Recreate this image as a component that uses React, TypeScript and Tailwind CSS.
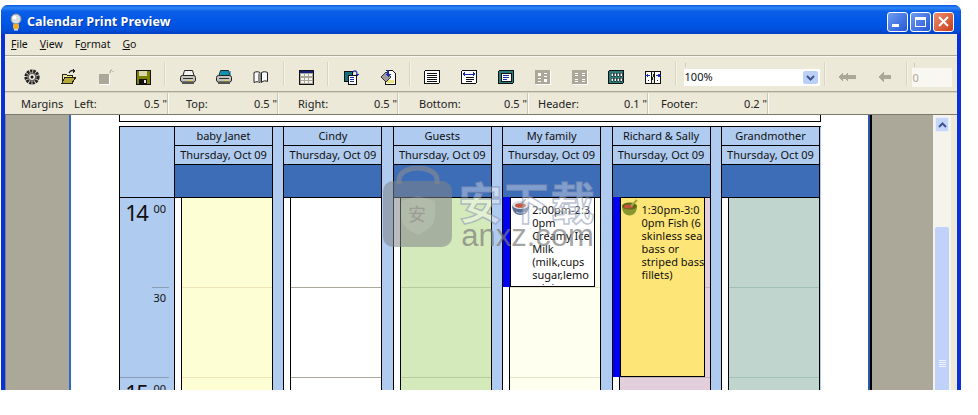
import type { ReactNode } from "react";

function Ico({ children, w = 16, h = 16 }: { children: ReactNode; w?: number; h?: number }) {
  return (
    <svg width={w} height={h} viewBox={`0 0 ${w} ${h}`} shapeRendering="crispEdges">
      {children}
    </svg>
  );
}

const Gear = () => (
  <Ico>
    <circle cx="8" cy="8" r="6" fill="none" stroke="#222" strokeWidth="3.2" strokeDasharray="2.400 0.800" shapeRendering="auto" />
    <circle cx="8" cy="8" r="3.800" fill="none" stroke="#666" strokeWidth="1.500" shapeRendering="auto" />
    <circle cx="8" cy="8" r="1.500" fill="#111" shapeRendering="auto" />
  </Ico>
);
const Open = () => (
  <Ico>
    <path d="M1 5h4l1 1h5v8H1z" fill="#f4e98a" stroke="#222" />
    <path d="M1 14l3-6h11l-4 6z" fill="#b5a83a" stroke="#222" />
    <path d="M8 4c1-2 3-3 5-2" fill="none" stroke="#222" strokeWidth="1.3" shapeRendering="auto" />
    <path d="M12 0l3 2-3 2z" fill="#222" />
  </Ico>
);
const Locked = () => (
  <Ico>
    <path d="M1 5h10v10H1z" fill="#aca899" />
    <path d="M11 6h1v10H2v-1h9z" fill="#fff" />
    <path d="M12 4c0-2 1-3 2-3s1 1 1 2" fill="none" stroke="#aca899" strokeWidth="1.2" shapeRendering="auto" />
    <path d="M14 1h1v1h-1z" fill="#fff" />
  </Ico>
);
const Save = () => (
  <Ico>
    <path d="M1 1h14v14H1z" fill="#808000" stroke="#111" />
    <path d="M4 2h8v5H4z" fill="#d8d8a8" />
    <path d="M4 10h8v5H4z" fill="#111" />
    <path d="M9 11h2v3H9z" fill="#e8e8e8" />
  </Ico>
);
const Printer = ({ cyan }: { cyan?: boolean }) => (
  <svg width="16" height="16" viewBox="0 0 16 16">
    <path d="M4.500 1.500h8l1.500 5H3z" fill={cyan ? "#16b4c8" : "#f2f2f2"} stroke="#222" />
    {cyan && <path d="M5 3h10M5 5h10" stroke="#0b6f9f" />}
    <rect x="0.500" y="6.500" width="15" height="6.500" rx="2" fill="#c4c4bc" stroke="#222" />
    <path d="M2 13h12v2H2z" fill="#55554f" />
    <path d="M3 9h10v1H3z" fill="#333" />
    <path d="M9 11h3v1H9z" fill="#e8d83c" />
  </svg>
);
const Book = () => (
  <svg width="16" height="16" viewBox="0 0 16 16">
    <path d="M1 3.500c2-1 4-1 6 0v10c-2-1-4-1-6 0z" fill="#f8f8f8" stroke="#222" />
    <path d="M8.500 3.500c2-1 4-1 6 0v9c-2-1-4-1-6 1z" fill="#f8f8f8" stroke="#222" />
    <path d="M5 4.500h2v8.500H5z" fill="#8c8c8c" />
  </svg>
);
const Month = () => (
  <Ico>
    <path d="M1 1h14v14H1z" fill="#a8a69a" stroke="#111" />
    <path d="M2 2h13v2H2z" fill="#16217e" />
    {[5, 9, 12].map((y) =>
      [3, 7, 11].map((x) => <path key={`${x}${y}`} d={`M${x} ${y}h3v2h-3z`} fill="#f5f5ee" />)
    )}
  </Ico>
);
const Pages = () => (
  <Ico>
    <path d="M1 2h8v10H1z" fill="#17707a" stroke="#111" />
    <path d="M5 6h8v9H5z" fill="#fff" stroke="#111" />
    <path d="M7 8h4v1H7zM7 10h4v1H7zM7 12h4v1H7z" fill="#1c2fb4" />
    <path d="M10 3c2-2 4-1 4 2" fill="none" stroke="#1c2fb4" strokeWidth="1.2" shapeRendering="auto" />
    <path d="M12 5h4l-2 2z" fill="#1c2fb4" />
  </Ico>
);
const Paint = () => (
  <Ico>
    <path d="M6 1h6l3 3v11H5V8" fill="#fff" stroke="#111" />
    <path d="M7 11h7v3H7z" fill="#ece27a" />
    <path d="M1 8l5-5 5 5-5 5z" fill="#9c9c9c" stroke="#333" />
    <path d="M7 1h2v5H7z" fill="#1c2fb4" />
    <path d="M5 5h6l-3 3z" fill="#1c2fb4" />
  </Ico>
);
const Frame = ({ children, teal }: { children?: ReactNode; teal?: boolean }) => (
  <Ico>
    <rect x="0.5" y="1.5" width="15" height="13" rx="1.5" fill={teal ? "#2b7d7d" : "#fff"} stroke="#111" />
    {children}
  </Ico>
);
const Lines = () => (
  <Frame>
    <path d="M3 4h10v1H3zM3 6h10v1H3zM3 8h10v1H3zM3 10h10v1H3zM3 12h10v1H3z" fill="#111" />
  </Frame>
);
const Wide = () => (
  <Frame>
    <path d="M1 5l3-2v4zM15 5l-3-2v4z" fill="#1c2fb4" />
    <path d="M4 5h8v1H4z" fill="#1c2fb4" />
    <path d="M5 8h8v1H5zM5 10h8v1H5zM5 12h6v1H5z" fill="#111" />
  </Frame>
);
const TealPage = () => (
  <Frame teal>
    <path d="M3 4h10v8H3z" fill="#fff" stroke="#111" />
    <path d="M5 6h6v1H5zM5 8h6v1H5zM5 10h4v1H5z" fill="#1c2fb4" />
  </Frame>
);
const OffTwo = () => (
  <Ico>
    <rect x="1" y="2" width="15" height="14" fill="#fff" />
    <rect x="0" y="1" width="15" height="14" rx="1" fill="#aca899" />
    <path d="M3 4h3v3H3zM9 4h3v1H9zM9 7h3v1H9zM3 9h3v1H3zM3 12h3v1H3zM9 10h3v3H9z" fill="#fff" />
  </Ico>
);
const OffFour = () => (
  <Ico>
    <rect x="1" y="2" width="15" height="14" fill="#fff" />
    <rect x="0" y="1" width="15" height="14" rx="1" fill="#aca899" />
    <path d="M3 4h3v1H3zM10 4h3v1h-3zM3 6h3v1H3zM10 6h3v1h-3zM3 10h3v1H3zM10 10h3v1h-3zM3 12h3v1H3zM10 12h3v1h-3z" fill="#fff" />
  </Ico>
);
const Six = () => (
  <Frame teal>
    {[4, 9].map((y) =>
      [3, 6, 9, 12].map((x) => <path key={`${x}${y}`} d={`M${x} ${y}h2v3h-2z`} fill="#fff" stroke="#111" strokeWidth="0.5" />)
    )}
  </Frame>
);
const Facing = () => (
  <Ico>
    <path d="M0.500 2.500h6v12h-6zM9.500 2.500h6v12h-6z" fill="#fff" stroke="#111" />
    <path d="M7 2h2v1H7zM7 14h2v1H7z" fill="#111" />
    <path d="M9 5h-1v3H7v3H6v2h1v-2h1V8h1z" fill="#222" />
    <path d="M3 6h2v1H3zM11 6h2v1h-2z" fill="#1c2fb4" />
    <path d="M0 6.500l3-2v4zM16 6.500l-3-2v4z" fill="#1c2fb4" />
    <path d="M3 11h1v1H3zM12 11h1v1h-1z" fill="#222" />
  </Ico>
);
const BackTwo = () => (
  <Ico w={18} h={14}>
    <path d="M0 7l5-5v3h2l3-3v3h8v4h-8v3L7 9H5v3z" fill="#aca899" />
  </Ico>
);
const BackOne = () => (
  <Ico w={13} h={14}>
    <path d="M0 7l6-5v3h7v4H6v3z" fill="#aca899" />
  </Ico>
);

function Tool({ children }: { children: ReactNode }) {
  return <div className="w-[36.8px] h-[34px] pt-[6px] flex items-center justify-center">{children}</div>;
}
function Sep() {
  return <div className="w-[8px] flex justify-center"><div className="w-[2px] h-[24px] bg-[#d8d4c4] border-r border-[#f6f4ea]" /></div>;
}

function Margin({ label, value, w, pad }: { label: string; value: string; w: string; pad: string }) {
  return (
    <div className={`${w} ${pad} h-[21px] flex items-center justify-between pr-px border-r border-[#fbfaf4] shadow-[inset_-1px_0_0_#c9c6b4]`}>
      <span className="pt-[2px]">{label}</span>
      <span className="pt-[2px]">{value} "</span>
    </div>
  );
}

const cols = [
  { name: "baby Janet", fill: "bg-[#fefed4]", line: "border-[#efe3b8]" },
  { name: "Cindy", fill: "bg-white", line: "border-[#aca899]" },
  { name: "Guests", fill: "bg-[#d5eabb]", line: "border-[#b9ca9f]" },
  { name: "My family", fill: "bg-[#fffff0]", line: "border-[#e4e2c8]" },
  { name: "Richard & Sally", fill: "bg-[#e2cfdb]", line: "border-[#c4b3bd]" },
  { name: "Grandmother", fill: "bg-[#c1d5cf]", line: "border-[#a3c0b5]" },
];

function BowlBlue() {
  return (
    <svg width="17" height="17" viewBox="0 0 17 17">
      <path d="M0 6h17c0 6-3 10-8.500 10S0 12 0 6z" fill="#5d6f8f" />
      <ellipse cx="8.500" cy="6" rx="8.500" ry="4" fill="#d8dfe8" />
      <ellipse cx="8.500" cy="6.500" rx="5.500" ry="2.300" fill="#c6563c" />
      <path d="M4 13c3 1.500 6 1.500 9 0" stroke="#b8c6da" fill="none" />
      <path d="M9 5l5-5" stroke="#8d8d8d" strokeWidth="1.300" />
    </svg>
  );
}
function BowlGreen() {
  return (
    <svg width="17" height="17" viewBox="0 0 17 17">
      <path d="M0 7h15c0 6-3 9.500-7.500 9.500S0 13 0 7z" fill="#87962e" />
      <ellipse cx="7.500" cy="7" rx="7.500" ry="3.500" fill="#5a6a1a" />
      <ellipse cx="6.500" cy="7.500" rx="4.500" ry="2" fill="#c8503a" />
      <path d="M9 7l6-6" stroke="#a3a83e" strokeWidth="2.200" />
    </svg>
  );
}

function EventBox({ bg, h, icon, lines }: { bg: string; h: string; icon: ReactNode; lines: string[] }) {
  return (
    <div className={`absolute left-0 top-[-1px] w-[92px] ${h} flex z-10`}>
      <div className="w-[7px] bg-[#0000f0]" />
      <div className={`flex-1 ${bg} border border-black flex overflow-hidden`}>
        <div className="w-[21px] pt-px pl-px shrink-0">{icon}</div>
        <div className="leading-[13px] pt-[5px] whitespace-nowrap">
          {lines.map((l, i) => (
            <div key={i}>{l}</div>
          ))}
        </div>
      </div>
    </div>
  );
}

function Column({ name, fill, line, children }: { name: string; fill: string; line: string; children?: ReactNode }) {
  return (
    <div className="w-[99px] shrink-0 border-x border-black h-full flex flex-col">
      <div className="h-[19px] shrink-0 border-b border-black flex items-center justify-center">{name}</div>
      <div className="h-[19px] shrink-0 border-b border-black flex items-center justify-center">Thursday, Oct 09</div>
      <div className="h-[33px] shrink-0 bg-[#3e6db8] border-b border-black" />
      <div className="relative flex flex-1 bg-white">
        <div className="w-[6px] shrink-0" />
        <div className={`flex-1 border-l border-black ${fill}`}>
          <div className={`h-[90px] border-b ${line}`} />
          <div className={`h-[90px] border-b ${line}`} />
        </div>
        {children}
      </div>
    </div>
  );
}

function Hour({ h }: { h: string }) {
  return (
    <div className="flex justify-end pr-[8px] pt-px gap-[6px]">
      <span className="text-[22px] leading-[26px] tracking-[-1.500px]">{h}</span>
      <span className="text-[11px] leading-[13px] mt-[3px]">00</span>
    </div>
  );
}

export default function App() {
  return (
    <div className="w-[978px] h-[415px] bg-white overflow-hidden font-['Noto_Sans',sans-serif] text-[11px] text-[#111]">
      <div className="ml-px mt-[5px] w-[960px] h-[385px] rounded-t-[7px] bg-[#0831d9] px-[4px] flex flex-col overflow-hidden">
        {/* Title bar */}
        <div className="-mx-[4px] h-[29px] shrink-0 flex items-center pt-[4px] pl-[7px] pr-[7px] bg-[linear-gradient(180deg,#0a5be0_0%,#2f86f5_10%,#0a5fe8_22%,#0056e6_60%,#0050dc_85%,#0040c0_100%)]">
          <svg width="16" height="18" viewBox="0 0 16 18" className="mr-[3px]">
            <circle cx="8" cy="6" r="5" fill="#d8dde0" stroke="#8a9098" />
            <circle cx="6.500" cy="4.500" r="2" fill="#fff" />
            <rect x="5" y="11" width="6" height="5" rx="1" fill="#f0a82a" />
            <rect x="6" y="16" width="4" height="1.500" fill="#d6e0ea" />
          </svg>
          <span className="pt-[2px] font-['Open_Sans',sans-serif] font-bold text-[12.5px] text-white [text-shadow:1px_1px_0_#0a3aa8]">Calendar Print Preview</span>
          <div className="ml-auto flex gap-[2px]">
            <div className="w-[21px] h-[20px] rounded-[3px] border border-white bg-[linear-gradient(135deg,#6f9cf0,#2457d8)] flex items-end pl-[4px] pb-[4px]">
              <div className="w-[7px] h-[3px] bg-white" />
            </div>
            <div className="w-[21px] h-[20px] rounded-[3px] border border-white bg-[linear-gradient(135deg,#6f9cf0,#2457d8)] flex items-center justify-center">
              <div className="w-[11px] h-[10px] border border-white border-t-[3px]" />
            </div>
            <div className="w-[21px] h-[20px] rounded-[3px] border border-white bg-[linear-gradient(135deg,#ee9070,#c83a18)] flex items-center justify-center">
              <svg width="11" height="11" viewBox="0 0 11 11"><path d="M1 1l9 9M10 1l-9 9" stroke="#fff" strokeWidth="2" /></svg>
            </div>
          </div>
        </div>

        {/* Menu */}
        <div className="h-[21px] shrink-0 bg-[#ece9d8] flex items-center gap-[12px] pl-[6px] pt-px text-[10.5px]">
          <span><u>F</u>ile</span>
          <span><u>V</u>iew</span>
          <span>F<u>o</u>rmat</span>
          <span><u>G</u>o</span>
        </div>
        <div className="h-[2px] shrink-0 bg-[#f8f7f0] border-t border-[#aca899]" />

        {/* Toolbar */}
        <div className="h-[34px] shrink-0 bg-[#ece9d8] flex items-center pl-[9px]">
          <Tool><Gear /></Tool>
          <Tool><Open /></Tool>
          <Tool><Locked /></Tool>
          <Tool><Save /></Tool>
          <Sep />
          <Tool><Printer /></Tool>
          <Tool><Printer cyan /></Tool>
          <Tool><Book /></Tool>
          <Sep />
          <Tool><Month /></Tool>
          <Sep />
          <Tool><Pages /></Tool>
          <Tool><Paint /></Tool>
          <Sep />
          <Tool><Lines /></Tool>
          <Tool><Wide /></Tool>
          <Tool><TealPage /></Tool>
          <Tool><OffTwo /></Tool>
          <Tool><OffFour /></Tool>
          <Tool><Six /></Tool>
          <Tool><Facing /></Tool>
          <Sep />
          <div className="relative ml-[4px] w-[136px] h-[17px] bg-white flex items-center justify-between pl-px pr-[2px] mt-[7px]">
            <div className="absolute -top-[6px] left-px w-px h-[4px] bg-[#cfcbb8]" />
            <span>100%</span>
            <div className="w-[15px] h-[13px] rounded-[2px] bg-[#bcd0f6] flex items-center justify-center">
              <svg width="9" height="6" viewBox="0 0 9 6"><path d="M1 1l3.500 3.500L8 1" fill="none" stroke="#3c5590" strokeWidth="2" /></svg>
            </div>
          </div>
          <div className="ml-[1px]"><Sep /></div>
          <div className="w-[37px] pt-[6px] flex justify-center"><BackTwo /></div>
          <div className="w-[37px] pt-[6px] flex justify-center"><BackOne /></div>
          <Sep />
          <div className="relative ml-px w-[40px] h-[19px] bg-[#f8f7f2] text-[#aca899] pl-px leading-[19px] mt-[7px]">
            <div className="absolute -top-[5px] left-[2px] w-px h-[4px] bg-[#cfcbb8]" />
            0
          </div>
        </div>
        <div className="h-[2px] shrink-0 bg-[#aca899] border-b border-[#d6d3c2]" />

        {/* Margins */}
        <div className="h-[21px] shrink-0 bg-[#ece9d8] flex items-center pl-[16px] text-[#222]">
          <span className="w-[49px] pt-[2px]">Margins</span>
          <Margin label="Left:" value="0.5" w="w-[99px]" pad="pl-[4px]" />
          <Margin label="Top:" value="0.5" w="w-[110px]" pad="pl-[17px]" />
          <Margin label="Right:" value="0.5" w="w-[120px]" pad="pl-[19px]" />
          <Margin label="Bottom:" value="0.5" w="w-[130px]" pad="pl-[20px]" />
          <Margin label="Header:" value="0.1" w="w-[120px]" pad="pl-[9px]" />
          <Margin label="Footer:" value="0.2" w="w-[120px]" pad="pl-[12px]" />
        </div>
        <div className="h-px shrink-0 bg-[#7d7a6c]" />

        {/* Preview area */}
        <div className="h-[275px] shrink-0 flex overflow-hidden bg-[#ece9d8]">
          <div className="w-[64px] shrink-0 bg-[#aca899] border-l border-[#808080]" />
          <div className="w-[801px] shrink-0 bg-white border-x-2 border-l-[#316ac5] border-r-[#2a55b0] relative">
            <div className="ml-[48px] w-[702px]">
              <div className="h-[7px] border-x border-b border-black" />
              <div className="mt-[4px] h-[268px] border-t border-l border-black bg-[#afcbef] flex gap-[10.4px] overflow-hidden relative">
                {/* Time column */}
                <div className="w-[54px] shrink-0 -mr-[10.4px] flex flex-col">
                  <div className="h-[71px] shrink-0 border-b border-black" />
                  <div className="h-[90px] shrink-0 relative">
                    <Hour h="14" />
                    <div className="absolute bottom-0 right-[5px] w-[17px] border-b border-[#8b9cb6]" />
                  </div>
                  <div className="h-[90px] shrink-0 border-b border-[#8b9cb6] mr-[5px] pt-[3px] pr-[3px] text-right leading-[13px]">30</div>
                  <Hour h="15" />
                </div>
                {cols.map((c) => (
                  <Column key={c.name} {...c}>
                    {c.name === "My family" && (
                      <EventBox bg="bg-white" h="h-[90px]" icon={<BowlBlue />} lines={["2:00pm-2:3", "0pm", "Creamy Ice", "Milk", "(milk,cups", "sugar,lemo", "n juice"]} />
                    )}
                    {c.name === "Richard & Sally" && (
                      <EventBox bg="bg-[#fde577]" h="h-[180px]" icon={<BowlGreen />} lines={["1:30pm-3:0", "0pm Fish (6", "skinless sea", "bass or", "striped bass", "fillets)"]} />
                    )}
                  </Column>
                ))}
                {/* Watermark */}
                <div className="absolute left-[262px] top-[39px] w-[70px] h-[80px] z-20">
                  <svg width="72" height="82" viewBox="0 0 72 82">
                    <path d="M17 18V14C17 6 27 2 36 2s19 4 19 12v4" fill="none" stroke="#8c8c8c" strokeOpacity="0.6" strokeWidth="5" />
                    <rect x="1" y="15" width="69" height="66" rx="10" fill="#808488" fillOpacity="0.55" />
                    <path d="M36 30l17 5v15c0 10-9 15-17 19-8-4-17-9-17-19V35z" fill="#fff" fillOpacity="0.12" />
                  </svg>
                  <span className="absolute left-[26px] top-[36px] text-[18px] leading-[22px] font-['Noto_Sans_CJK_SC',sans-serif] text-[#9a9d92]">安</span>
                </div>
                <div className="absolute left-[335px] top-[50px] w-[145px] z-20 text-center">
                  <div className="text-[44px] leading-[48px] font-bold tracking-[2px] whitespace-nowrap font-['Noto_Sans_CJK_SC',sans-serif] text-white/35 [-webkit-text-stroke:1.5px_rgba(130,145,175,0.55)]">安下载</div>
                  <div className="-mt-[4px] text-[31px] leading-[30px] whitespace-nowrap font-['Liberation_Sans',sans-serif] text-[#7c7c7c]/70">anxz.com</div>
                </div>
              </div>
            </div>
          </div>
          <div className="w-[63px] shrink-0 bg-[#aca899] border-l-2 border-black" />
          {/* Scrollbar */}
          <div className="w-[18px] shrink-0 bg-[#f4f3ec] flex flex-col items-center pt-[2px]">
            <div className="w-[14px] h-[15px] rounded-[2px] bg-[#c6d6f8] border border-[#e8eefc] flex items-center justify-center">
              <svg width="9" height="6" viewBox="0 0 9 6"><path d="M1 5l3.500-3.500L8 5" fill="none" stroke="#3c5590" strokeWidth="2" /></svg>
            </div>
            <div className="mt-[95px] w-[14px] flex-1 bg-[#c0d2fa] rounded-t-[2px] flex flex-col items-center pt-[133px] gap-px">
              <div className="w-[7px] h-px bg-[#eef3fe]" />
              <div className="w-[7px] h-px bg-[#eef3fe]" />
              <div className="w-[7px] h-px bg-[#eef3fe]" />
              <div className="w-[7px] h-px bg-[#eef3fe]" />
            </div>
          </div>
          <div className="flex-1 bg-[#ece9d8]" />
        </div>
      </div>
    </div>
  );
}
